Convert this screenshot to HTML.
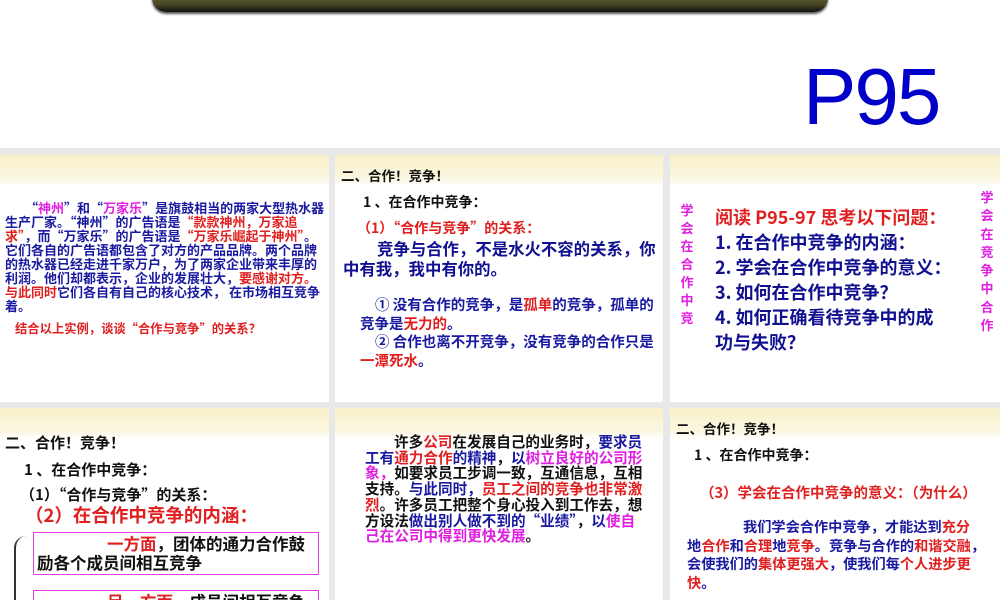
<!DOCTYPE html>
<html><head><meta charset="utf-8"><style>
*{margin:0;padding:0;box-sizing:border-box}
body{width:1000px;height:600px;background:#fff;position:relative;overflow:hidden;font-family:"Noto Sans CJK SC","Liberation Sans",sans-serif;font-weight:bold}
.bar{position:absolute;left:152px;top:-8px;width:676px;height:20px;border-radius:0 0 14px 14px;background:linear-gradient(#6b6a3a,#4a4826 60%,#111);box-shadow:0 2px 2px #555}
.p95{position:absolute;left:803px;top:52px;font-family:"Liberation Sans",sans-serif;font-size:80px;font-weight:normal;color:#0000c8;letter-spacing:-2px;line-height:90px}
.gray{position:absolute;left:0;top:148px;width:1000px;height:452px;background:#e8e8e8}
.pn{position:absolute;background:#fff;overflow:hidden}
.pn:before{content:"";position:absolute;left:0;top:0;right:0;height:32px;background:linear-gradient(#f8f0c8,#fbf6e0 70%,#fff)}
.pn>*{position:absolute;white-space:nowrap}
.b{color:#1a1aa0}.r{color:#e02020}.m{color:#e020e0}.k{color:#111}
.i{display:inline-block}
</style></head><body>
<div class="bar"></div>
<div class="p95">P95</div>
<div class="gray"></div>

<div class="pn" style="left:0;top:155px;width:329px;height:247px">
<div class="b" style="left:5px;top:46px;font-size:13px;line-height:14px"><span class="i" style="width:20px"></span>“<span class="m">神州</span>”和“<span class="m">万家乐</span>”是旗鼓相当的两家大型热水器<br>生产厂家。“神州”的广告语是<span class="r">“款款神州，万家追<br>求”</span>，而“万家乐”的广告语是<span class="r">“万家乐崛起于神州”</span>。<br>它们各自的广告语都包含了对方的产品品牌。两个品牌<br>的热水器已经走进千家万户，为了两家企业带来丰厚的<br>利润。他们却都表示，企业的发展壮大，<span class="r">要感谢对方。</span><br><span class="r">与此同时</span>它们各自有自己的核心技术， 在市场相互竞争<br>着。</div>
<div class="r" style="left:15px;top:166px;font-size:12.3px;line-height:14px">结合以上实例，谈谈“合作与竞争”的关系？</div>
</div>

<div class="pn" style="left:335px;top:155px;width:328px;height:247px">
<div class="k" style="left:6px;top:12px;font-size:13.5px;line-height:16px">二、合作！竞争！</div>
<div class="k" style="left:28px;top:39px;font-size:14px;line-height:16px">1 、在合作中竞争：</div>
<div class="r" style="left:22px;top:65px;font-size:14px;line-height:16px">（1）“合作与竞争”的关系：</div>
<div style="left:8px;top:83px;font-size:16.4px;line-height:20px;color:#101090"><span class="i" style="width:34px"></span>竞争与合作，不是水火不容的关系，你<br>中有我，我中有你的。</div>
<div class="b" style="left:25px;top:141px;font-size:14.5px;line-height:18.5px"><span class="i" style="width:15px"></span>① 没有合作的竞争，是<span class="r">孤单</span>的竞争，孤单的<br>竞争是<span class="r">无力的</span>。<br><span class="i" style="width:15px"></span>② 合作也离不开竞争，没有竞争的合作只是<br><span class="r">一潭死水</span>。</div>
</div>

<div class="pn" style="left:670px;top:155px;width:330px;height:247px">
<div class="m" style="left:5px;top:46px;width:24px;font-size:13px;line-height:18px;text-align:center;white-space:normal">学会在合作中竞</div>
<div class="m" style="left:306px;top:33px;width:22px;font-size:13px;line-height:18.3px;text-align:center;white-space:normal">学会在竞争中合作</div>
<div style="left:45px;top:50px;font-size:18px;line-height:25px;color:#101090"><span class="r">阅读 P95-97 思考以下问题：</span><br>1. 在合作中竞争的内涵：<br>2. 学会在合作中竞争的意义：<br>3. 如何在合作中竞争？<br>4. 如何正确看待竞争中的成<br>功与失败？</div>
</div>

<div class="pn" style="left:0;top:408px;width:329px;height:192px">
<div class="k" style="left:5px;top:26px;font-size:15px;line-height:18px">二、合作！竞争！</div>
<div class="k" style="left:24px;top:53px;font-size:15px;line-height:18px">1 、在合作中竞争：</div>
<div class="k" style="left:20px;top:78px;font-size:15px;line-height:18px">（1）“合作与竞争”的关系：</div>
<div class="r" style="left:25px;top:96px;font-size:18.5px;line-height:22px">（2）在合作中竞争的内涵：</div>
<div style="left:14px;top:128px;width:20px;height:80px;border-left:2px solid #333;border-radius:12px 0 0 12px"></div>
<div class="k" style="left:33px;top:124px;width:286px;height:43px;border:1px solid #e040e0;font-size:16.5px;line-height:19px;padding:1px 3px"><span class="i" style="width:70px"></span><span class="r">一方面</span>，团体的通力合作鼓<br>励各个成员间相互竞争</div>
<div class="k" style="left:33px;top:182px;width:286px;height:43px;border:1px solid #e040e0;font-size:16.5px;line-height:19px;padding:1px 3px"><span class="i" style="width:70px"></span><span class="r">另一方面</span>，成员间相互竞争</div>
</div>

<div class="pn" style="left:335px;top:408px;width:328px;height:192px">
<div class="k" style="left:30px;top:26px;font-size:14.6px;line-height:15.7px"><span class="i" style="width:29px"></span>许多<span class="r">公司</span>在发展自己的业务时，<span class="b">要求员<br>工有</span><span class="r">通力合作</span><span class="b">的精神</span>，<span class="b">以</span><span class="m">树立良好的公司形<br>象，</span>如要求员工步调一致，互通信息，互相<br>支持。<span class="b">与此同时，</span><span class="r">员工之间的竞争也非常激<br>烈</span>。许多员工把整个身心投入到工作去，想<br>方设法<span class="b">做出别人做不到的“业绩”</span>，<span class="b">以</span><span class="m">使自<br>己在公司中得到更快发展</span>。</div>
</div>

<div class="pn" style="left:670px;top:408px;width:330px;height:192px">
<div class="k" style="left:6px;top:12px;font-size:13.5px;line-height:16px">二、合作！竞争！</div>
<div class="k" style="left:24px;top:39px;font-size:14px;line-height:16px">1 、在合作中竞争：</div>
<div class="r" style="left:30px;top:76px;font-size:14.5px;line-height:17px">（3）学会在合作中竞争的意义：（为什么）</div>
<div class="b" style="left:17px;top:110px;font-size:14.2px;line-height:18.7px"><span class="i" style="width:56px"></span>我们学会合作中竞争，才能达到<span class="r">充分</span><br>地<span class="r">合作</span>和<span class="r">合理</span>地<span class="r">竞争</span>。竞争与合作的<span class="r">和谐交融</span>，<br>会使我们的<span class="r">集体更强大</span>，使我们每<span class="r">个人进步更</span><br><span class="r">快</span>。</div>
</div>
</body></html>
